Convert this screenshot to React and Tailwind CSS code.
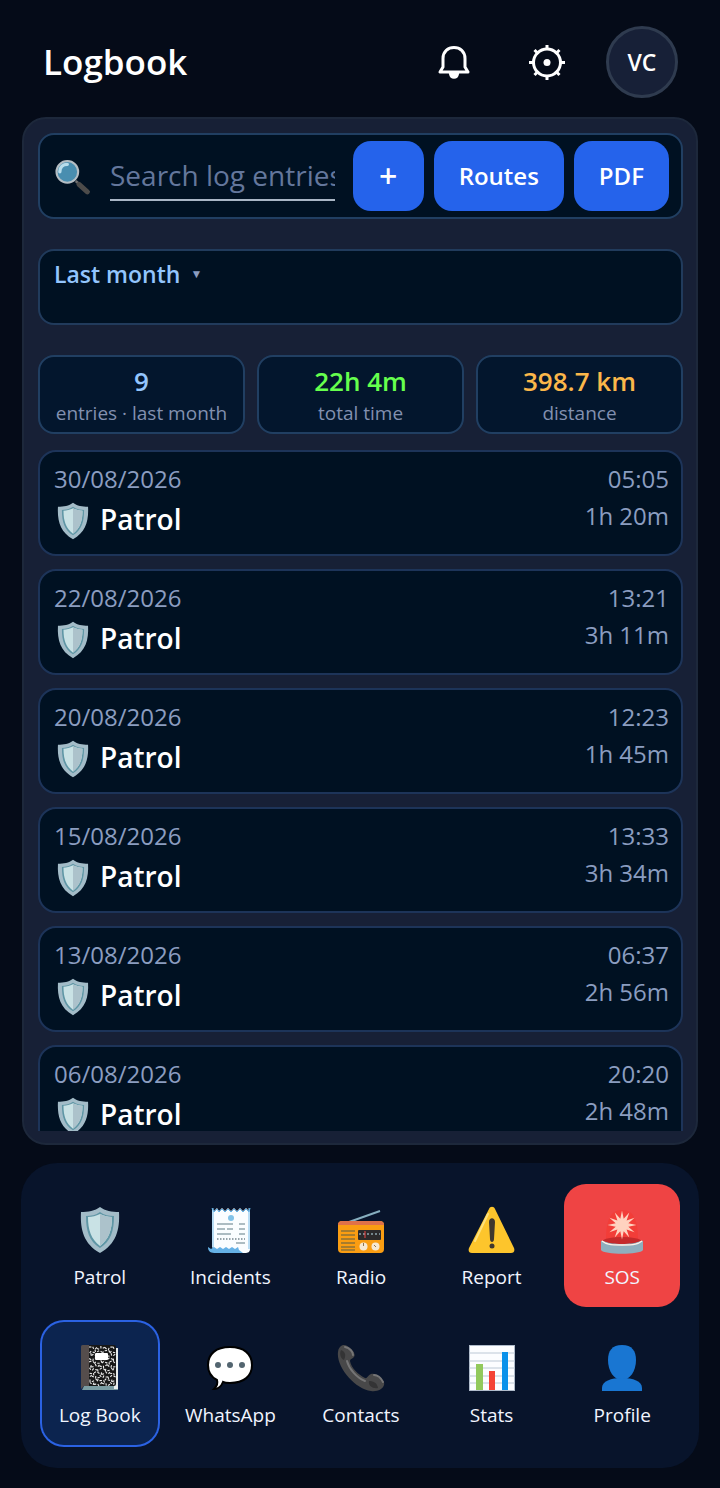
import { useState } from 'react'

const entries = [
  { date: '30/08/2026', time: '05:05', duration: '1h 20m' },
  { date: '22/08/2026', time: '13:21', duration: '3h 11m' },
  { date: '20/08/2026', time: '12:23', duration: '1h 45m' },
  { date: '15/08/2026', time: '13:33', duration: '3h 34m' },
  { date: '13/08/2026', time: '06:37', duration: '2h 56m' },
  { date: '06/08/2026', time: '20:20', duration: '2h 48m' },
]

const stats = [
  { value: '9', label: 'entries · last month', color: 'text-[#93c5fd]' },
  { value: '22h 4m', label: 'total time', color: 'text-[#66ff4d]' },
  { value: '398.7 km', label: 'distance', color: 'text-[#fbb74a]' },
]

function Icon({ className = 'size-12', children }) {
  return (
    <svg aria-hidden="true" className={`${className} shrink-0`} viewBox="0 0 48 48" fill="none">
      {children}
    </svg>
  )
}

function ShieldIcon({ className }) {
  return (
    <Icon className={className}>
      <path d="M24 1c5 4 12 5 19 5 1 18-3 32-19 41C8 38 4 24 5 6c7 0 14-1 19-5Z" fill="#a3bcc8" />
      <path d="M24 6c4 3 9 4 14 4 0 15-3 25-14 32C13 35 10 25 10 10c5 0 10-1 14-4Z" fill="#5f96a5" />
      <path d="M24 8c4 2 8 3 12 3 0 13-3 22-12 29C15 33 12 24 12 11c4 0 8-1 12-3Z" fill="#c9e2e5" />
      <path d="M24 8c4 2 8 3 12 3 0 13-3 22-12 29Z" fill="#acc2cb" />
    </Icon>
  )
}

function ReceiptIcon() {
  return (
    <Icon>
      <path d="M6 2l2 3 3-3 2 3 3-3 3 3 3-3 3 3 3-3 3 3 3-3 3 3 3-3 3 3 1-3v41c0 3-2 4-5 4H12l-6-6Z" fill="#fafdff" />
      <path d="M7 2v40M43 2v41" stroke="#79bdea" />
      <path d="M6 2l2 4 3-3 2 3 3-3 3 3 3-3 3 3 3-3 3 3 3-3 3 3 3-3 3 3 1-4" stroke="#65b4e8" />
      <path d="M2 41l3 2 3-2 3 2 3-2 3 2 3-2 3 2 3-2 3 2 3-2 1 3 4 3H10c-5 0-8-1-8-6Z" fill="#65b1e6" />
      <circle cx="25" cy="12" r="3" fill="#82c3e8" />
      <path d="M11 18h16M33 18h6M11 23h8M21 23h6M33 23h6M11 28h14M33 28h6M30 37h9" stroke="#93a6af" strokeWidth="1.5" />
      <path d="M11 33h28" stroke="#75858e" strokeWidth="1.5" strokeDasharray="1.5 1.5" />
    </Icon>
  )
}

function RadioIcon() {
  return (
    <Icon>
      <path d="M12 16 43 5" stroke="#86aebf" strokeWidth="2" />
      <rect x="1" y="15" width="46" height="32" rx="4" fill="#fa9d12" />
      <path d="M1 19c0-3 2-4 4-4h38c2 0 4 1 4 4Z" fill="#df7149" />
      <path d="M4 25h14M4 29h14M4 33h14M4 37h14M4 41h14M4 44h14" stroke="#8d7136" strokeWidth="1.5" />
      <rect x="21" y="24" width="23" height="10" rx="1" fill="#2b2a2b" />
      <path d="M22 28h21" stroke="#8ea7ad" strokeWidth="1.5" strokeDasharray="2 2" />
      <path d="M28 25v7" stroke="#ef4444" />
      <circle cx="26.5" cy="40.5" r="4" fill="#f6e8d2" />
      <circle cx="38.5" cy="40.5" r="4" fill="#f6e8d2" />
      <path d="M26.5 37v3M37 39l2 2" stroke="#8b7355" />
    </Icon>
  )
}

function WarningIcon() {
  return (
    <Icon>
      <path d="M21 3c1-3 5-3 6 0l19 39c1 3 0 5-3 5H4c-3 0-4-2-3-5Z" fill="#fdc52c" />
      <path d="M20 8 7 35" stroke="#fee17c" strokeWidth="2" strokeLinecap="round" />
      <path d="M21 16c0-5 6-5 6 0l-1 17c0 4-4 4-4 0Z" fill="#40372d" />
      <circle cx="24" cy="40" r="2.5" fill="#40372d" />
    </Icon>
  )
}

// 12 spikes, alternating outer and inner radius
const flashPoints = Array.from({ length: 24 }, (_, i) => {
  const radius = i % 2 === 0 ? 14.5 : 6.5
  const angle = (i * Math.PI) / 12
  return `${(24 + radius * Math.sin(angle)).toFixed(1)},${(19 + radius * Math.cos(angle)).toFixed(1)}`
}).join(' ')

function SirenIcon() {
  return (
    <Icon>
      <path d="M8 35c0-18 3-31 16-31s16 13 16 31Z" fill="#f5352b" opacity=".5" />
      <ellipse cx="24" cy="35" rx="19" ry="4" fill="#c52a2b" />
      <polygon points={flashPoints} fill="#ffd2bf" />
      <path d="M3 35c3-1 4 3 21 3s18-4 21-3v9c-3 5-39 5-42 0Z" fill="#8faebd" />
      <path d="M4 35c4 3 7 4 20 4s16-1 20-4" stroke="#fff1e6" strokeWidth="1.5" />
    </Icon>
  )
}

const speckles = Array.from({ length: 110 }, (_, i) => ({
  x: 14 + (i % 10) * 2.6 + ((i * 7) % 3) * 0.5,
  y: 3 + Math.floor(i / 10) * 3.6 + ((i * 5) % 4) * 0.6,
  angle: (i * 67) % 180,
}))

function NotebookIcon() {
  return (
    <Icon>
      <path d="M8 42h34v4H6Z" fill="#7b9da3" />
      <path d="M38 4h4v41h-4Z" fill="#e8eded" />
      <rect x="6" y="1" width="34" height="41" rx="2" fill="#171717" />
      {speckles.map(({ x, y, angle }) => (
        <path
          key={`${x}-${y}`}
          d={`M${x - 1} ${y}h2.4`}
          stroke="#eeeeee"
          strokeWidth="1.1"
          transform={`rotate(${angle} ${x} ${y})`}
        />
      ))}
      <path d="M5 3c0-2 1-2 3-2h5v41H8l-3 3Z" fill="#554d4c" />
      <rect x="19" y="9" width="13" height="7" rx="1" fill="#ffffff" />
    </Icon>
  )
}

function ChatIcon() {
  return (
    <Icon>
      <path
        d="M24 3c14 0 22 7 22 18s-8 18-22 18c-3 0-5 0-7-1-2 5-6 7-9 7 3-3 4-6 3-9-6-3-9-8-9-15C2 10 10 3 24 3Z"
        fill="#ffffff"
        stroke="#000000"
        strokeWidth="2"
      />
      <circle cx="12" cy="21" r="3" fill="#536570" />
      <circle cx="24" cy="21" r="3" fill="#536570" />
      <circle cx="36" cy="21" r="3" fill="#536570" />
    </Icon>
  )
}

function PhoneIcon() {
  return (
    <Icon>
      <path
        d="M6 1c5-1 14 8 11 12-2 2-4 2-4 4 1 7 9 14 15 17 2 1 3-3 6-4 5-2 15 7 13 11-1 4-7 7-13 6C18 45-1 23 1 8c0-3 2-6 5-7Z"
        fill="#484849"
      />
      <path d="M8 3c5 1 8 5 8 8M10 17c2 8 10 17 18 20M37 31c4 0 7 3 9 7" stroke="#757576" strokeWidth="2" strokeLinecap="round" />
      <path d="M4 6c-2 4 0 9 3 10 2-4 2-8-3-10ZM32 37c-1 5 4 8 9 7-1-5-4-7-9-7Z" fill="#343435" />
    </Icon>
  )
}

function ChartIcon() {
  return (
    <Icon>
      <rect x="1.5" y="1.5" width="45" height="45" fill="#fcfdff" stroke="#afbbca" />
      <path d="M1 9h46M1 17h46M1 24h46M1 32h46M1 39h46" stroke="#bcc8d5" />
      <path d="M8 20h7v26H8Z" fill="#92c95c" />
      <path d="M21 27h6v19h-6Z" fill="#f44336" />
      <path d="M34 8h6v38h-6Z" fill="#0b91ea" />
    </Icon>
  )
}

function ProfileIcon() {
  return (
    <Icon>
      <path d="M24 1c10 0 14 6 14 15 0 11-6 20-14 20S10 27 10 16C10 7 14 1 24 1Z" fill="#1976d2" />
      <path d="M4 47v-3c0-7 9-10 20-10s20 3 20 10v3Z" fill="#1976d2" />
    </Icon>
  )
}

function SearchIcon() {
  return (
    <Icon className="size-10">
      <path d="m26 30 16 14" stroke="#707070" strokeWidth="3" />
      <path d="m30 34 10 9" stroke="#4c4b4a" strokeWidth="6" strokeLinecap="round" />
      <circle cx="16" cy="19" r="13" fill="#498eb0" stroke="#b5bec4" strokeWidth="2.5" />
      <path d="M7 19c0-6 4-9 9-9" stroke="#b8ddec" strokeWidth="4" strokeLinecap="round" />
    </Icon>
  )
}

function BellIcon() {
  return (
    <svg aria-hidden="true" className="size-9" viewBox="0 0 36 36" fill="none" stroke="#ffffff">
      <path
        d="M4 28h28l-3-5v-8.500C29 7.500 24 3.500 18 3.500S7 7.500 7 14.500V23Z"
        strokeWidth="3"
        strokeLinejoin="round"
      />
      <path d="M14 30c1 5 7 5 8 0Z" strokeWidth="2" fill="#ffffff" />
    </svg>
  )
}

function GearIcon() {
  return (
    <svg aria-hidden="true" className="size-9" viewBox="0 0 36 36" fill="none" stroke="#ffffff">
      <circle cx="18" cy="18.5" r="13.5" strokeWidth="3" />
      <circle cx="18" cy="18.5" r="3.5" fill="#ffffff" stroke="none" />
      <path
        d="M18 1v4M18 32v4M0 18.500h4M32 18.500h4M5.500 6l4 4M26.500 27l4 4M30.500 6l-4 4M9.500 27l-4 4"
        strokeWidth="3"
      />
    </svg>
  )
}

const navItems = [
  { label: 'Patrol', icon: ShieldIcon },
  { label: 'Incidents', icon: ReceiptIcon },
  { label: 'Radio', icon: RadioIcon },
  { label: 'Report', icon: WarningIcon },
  { label: 'SOS', icon: SirenIcon, style: 'bg-[#ef4444]' },
  { label: 'Log Book', icon: NotebookIcon, style: 'bg-[#0c244f] ring-2 ring-[#2b62e3]' },
  { label: 'WhatsApp', icon: ChatIcon },
  { label: 'Contacts', icon: PhoneIcon },
  { label: 'Stats', icon: ChartIcon },
  { label: 'Profile', icon: ProfileIcon },
]

function EntryCard({ entry }) {
  return (
    <li className="flex shrink-0 justify-between rounded-[18px] border-2 border-[#1d3459] bg-[#001122] pt-2 pr-3 pb-[13px] pl-[14px] text-2xl leading-[37px] text-[#8b9dc0]">
      <div>
        <time className="block">{entry.date}</time>
        <h2 className="flex h-11 items-center gap-2 text-[28px] font-semibold text-white">
          <ShieldIcon className="mt-1 size-[38px]" />
          Patrol
        </h2>
      </div>
      <div className="text-right">
        <time className="block">{entry.time}</time>
        <p>{entry.duration}</p>
      </div>
    </li>
  )
}

export default function App() {
  const [query, setQuery] = useState('')
  const [period, setPeriod] = useState('Last month')

  return (
    <div className="flex h-screen flex-col bg-[#050b18] px-[21px] pb-5 font-['Open_Sans',sans-serif] text-white">
      <header className="flex h-[117px] shrink-0 items-center justify-between pt-[17px] pr-[21px] pb-[10px] pl-[22px]">
        <h1 className="text-[35px] font-semibold">Logbook</h1>
        <div className="flex items-center gap-[41px]">
          <div className="flex gap-[57px]">
            <button aria-label="Notifications" type="button">
              <BellIcon />
            </button>
            <button aria-label="Settings" type="button">
              <GearIcon />
            </button>
          </div>
          <button
            className="size-[72px] rounded-full border-[3px] border-[#2f3b4f] bg-[#172037] text-[23px] font-semibold"
            type="button"
          >
            VC
          </button>
        </div>
      </header>

      <main className="mx-px flex min-h-0 flex-1 flex-col rounded-3xl border-2 border-[#1d283b] bg-[#172036] pt-[14px] pr-[13px] pb-3 pl-[14px]">
        <div className="flex shrink-0 items-center gap-[10px] rounded-2xl border-2 border-[#213f62] bg-[#001122] py-[6px] pr-3 pl-[14px]">
          <label className="flex min-w-0 flex-1 items-center gap-4 pr-2">
            <SearchIcon />
            <input
              aria-label="Search log entries"
              className="h-[50px] min-w-0 flex-1 border-b-2 border-[#a9b6c5] bg-transparent text-[28px] text-white outline-none placeholder:text-[#64779c]"
              onChange={(e) => setQuery(e.target.value)}
              placeholder="Search log entries…"
              type="text"
              value={query}
            />
          </label>
          <button
            aria-label="Add entry"
            className="h-[70px] w-[71px] rounded-[18px] bg-[#2563eb] text-[32px] font-semibold"
            type="button"
          >
            +
          </button>
          <button className="h-[70px] rounded-[18px] bg-[#2563eb] px-[25px] text-2xl font-semibold" type="button">
            Routes
          </button>
          <button className="h-[70px] rounded-[18px] bg-[#2563eb] px-[25px] text-2xl font-semibold" type="button">
            PDF
          </button>
        </div>

        <div className="mt-[30px] h-[76px] shrink-0 rounded-2xl border-2 border-[#213b5c] bg-[#001122] px-[14px] pt-[5px]">
          <label className="inline-flex items-center gap-[10px]">
            <select
              aria-label="Period"
              className="field-sizing-content appearance-none bg-transparent text-[23px] leading-9 font-semibold text-[#93c5fd] outline-none"
              onChange={(e) => setPeriod(e.target.value)}
              value={period}
            >
              <option>Last month</option>
              <option>This month</option>
              <option>All time</option>
            </select>
            <span aria-hidden="true" className="text-xs text-[#8b9dc0]">
              ▼
            </span>
          </label>
        </div>

        <dl className="mt-[30px] grid shrink-0 grid-cols-3 gap-3">
          {stats.map((stat) => (
            <div
              key={stat.label}
              className="flex flex-col-reverse rounded-2xl border-2 border-[#213f62] bg-[#03162d] pt-[6px] pb-[5px] text-center"
            >
              <dt className="text-[19px] leading-7 text-[#8290b0]">{stat.label}</dt>
              <dd className={`text-[26px] leading-9 font-semibold ${stat.color}`}>{stat.value}</dd>
            </div>
          ))}
        </dl>

        <ul className="mt-4 flex min-h-0 flex-1 flex-col gap-[13px] overflow-hidden">
          {entries.map((entry) => (
            <EntryCard key={entry.date} entry={entry} />
          ))}
        </ul>
      </main>

      <nav className="mt-[18px] grid shrink-0 grid-cols-5 gap-[15px] rounded-[36px] bg-[#08142b] pt-[21px] pr-[19px] pb-[23px] pl-[21px]">
        {navItems.map(({ label, icon: NavIcon, style = '' }) => (
          <button
            key={label}
            className={`flex h-[123px] flex-col items-center rounded-[22px] pt-[22px] text-[19px] leading-[46px] font-medium text-[#f1f5ff] ${style}`}
            type="button"
          >
            <NavIcon />
            {label}
          </button>
        ))}
      </nav>
    </div>
  )
}
